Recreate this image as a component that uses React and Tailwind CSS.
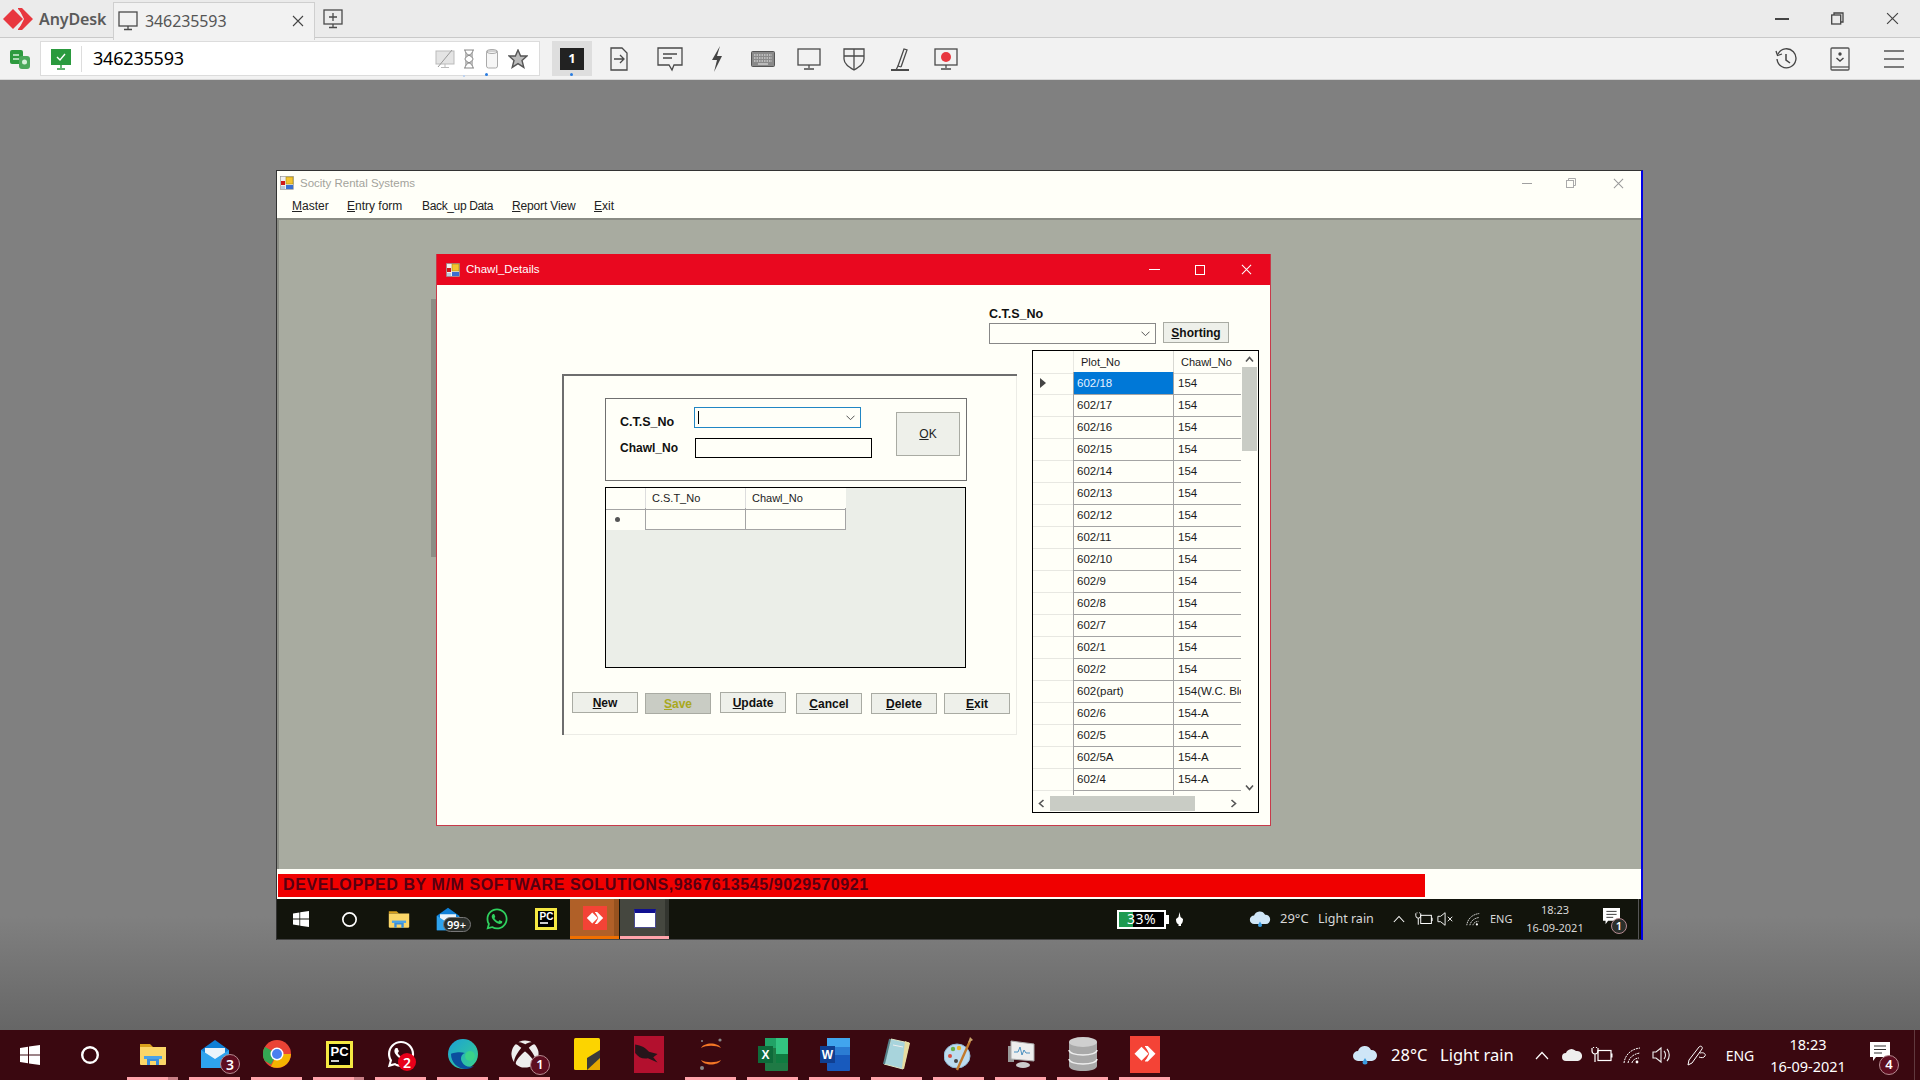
import React from "react";
import { FaWhatsapp, FaXbox } from "react-icons/fa";

const sans = "font-['Liberation_Sans',Arial,sans-serif]";
const noto = "font-['Noto_Sans',sans-serif]";

const Ic = ({ w = 24, h = 24, vb, children, className = "" }) => (
  <svg width={w} height={h} viewBox={vb || `0 0 ${w} ${h}`} fill="none" className={className}>{children}</svg>
);

const AnyLogo = ({ w = 30, h = 22, c = "#e8373f" }) => (
  <Ic w={w} h={h} vb="0 0 30 22">
    <path d="M0 11 L10 1 L20 11 L10 21Z" fill={c} />
    <path d="M15 0 L19 0 L30 11 L19 22 L15 22 L15 21 L24 11 L15 1Z" fill={c} />
    <path d="M16 1 L26 11 L16 21 L21 11Z" fill={c} />
  </Ic>
);

const stroke = { stroke: "#4a4a4a", strokeWidth: 1.3, fill: "none" };

const MonitorOutline = ({ w = 20, h = 20 }) => (
  <Ic w={w} h={h} vb="0 0 20 20"><rect x="1" y="1" width="18" height="14" {...stroke} /><path d="M10 15v3M6 18.5h8" {...stroke} /></Ic>
);

const NewTabIcon = () => (
  <Ic w={20} h={20}><rect x="1" y="1" width="18" height="14" {...stroke} /><path d="M10 4v8M6 8h8M10 15v3M6 18.5h8" {...stroke} /></Ic>
);

const CloseX = ({ s = 12, c = "#444" }) => (
  <Ic w={s} h={s} vb="0 0 12 12"><path d="M1 1l10 10M11 1L1 11" stroke={c} strokeWidth="1.1" /></Ic>
);

const ToolIcons = {
  file: (
    <Ic w={20} h={24}><path d="M2 1h11l5 5v17H2z" {...stroke} /><path d="M5 12h9M11 8l4 4-4 4" {...stroke} /></Ic>
  ),
  chat: (
    <Ic w={26} h={26}><path d="M1 2h24v17H17l-2 5-3-5H1z" {...stroke} /><path d="M6 8h14M6 12h9" {...stroke} /></Ic>
  ),
  bolt: (
    <Ic w={14} h={26}><path d="M10 0L2 14h5L4 26 12 10H7z" fill="#444" /></Ic>
  ),
  keyboard: (
    <Ic w={24} h={16}><rect x="0.5" y="0.5" width="23" height="15" rx="1" fill="#8a8a8a" stroke="#555" /><path d="M3 4h18M3 7h18M3 10h18" stroke="#eee" strokeDasharray="1.5 1" /><path d="M7 13h10" stroke="#eee" /></Ic>
  ),
  monitor: (
    <Ic w={24} h={24}><rect x="1" y="2" width="22" height="16" {...stroke} /><path d="M12 18v3M7 22h10" {...stroke} /></Ic>
  ),
  shield: (
    <Ic w={22} h={24}><path d="M1 2h20v10c0 5-5 8-10 11C6 20 1 17 1 12z" {...stroke} /><path d="M11 2v21M1 9h20" {...stroke} /></Ic>
  ),
  pen: (
    <Ic w={20} h={24}><path d="M8 19L14 2l3 1-6 17" {...stroke} /><path d="M1 23h18" stroke="#4a4a4a" strokeWidth="2" /><path d="M6 23l2-4 3 1" {...stroke} /></Ic>
  ),
  record: (
    <Ic w={24} h={24}><rect x="1" y="2" width="22" height="16" {...stroke} /><circle cx="12" cy="10" r="5" fill="#e8373f" /><path d="M12 18v3M7 22h10" {...stroke} /></Ic>
  ),
};

const GreyIcons = () => (
  <div className="flex items-center w-[100px] relative">
    <div className="w-[24px] flex justify-center">
      <Ic w={20} h={20}><rect x="1" y="2" width="18" height="13" stroke="#bbb" fill="#e4e4e4" /><path d="M3 18L17 1" stroke="#999" /><path d="M10 15v3M6 18.5h8" stroke="#bbb" /></Ic>
    </div>
    <div className="w-[24px] flex justify-center">
      <Ic w={14} h={20}><path d="M2 1h10M2 19h10M3 1c0 5 8 6 8 9s-8 4-8 9M11 1c0 5-8 6-8 9s8 4 8 9" stroke="#888" fill="#bbb" /></Ic>
    </div>
    <div className="w-[22px] flex justify-center">
      <Ic w={14} h={22}><rect x="1.5" y="3" width="11" height="17" rx="2" stroke="#aaa" fill="#f6f6f6" /><ellipse cx="7" cy="3.5" rx="5.5" ry="2" stroke="#aaa" /></Ic>
    </div>
    <div className="w-[30px] flex justify-center">
      <Ic w={20} h={20}><path d="M10 1l2.6 6H19l-5 4.4 1.8 7L10 14.6 4.2 18.4l1.8-7L1 7h6.4z" stroke="#555" strokeWidth="1.4" fill="#bbb" /></Ic>
    </div>
    <div className="absolute left-[30px] top-[27px] w-[2px] h-[2px] bg-[#c0d4f0]"></div>
    <div className="absolute left-[52px] top-[25px] w-[3px] h-[3px] rounded-full bg-[#2a7de1]"></div>
  </div>
);

const TopBar = () => (
  <div className={`${noto} shrink-0`}>
    <div className="h-[38px] bg-[#ebebeb] flex border-b border-[#c9c9c9]">
      <div className="w-[113px] flex items-center pl-[3px]">
        <AnyLogo />
        <span className="ml-[6px] text-[16px] font-semibold text-[#5a5a5a] tracking-[-0.1px]">AnyDesk</span>
      </div>
      <div className="w-[202px] h-[38px] mt-[2px] bg-[#f2f2f2] border border-[#cfcfcf] border-b-0 flex items-center pl-[4px] pb-[2px]">
        <MonitorOutline />
        <span className="ml-[7px] text-[16px] text-[#555] w-[147px] tracking-[-0.1px]">346235593</span>
        <CloseX />
      </div>
      <div className="ml-[8px] flex items-center"><NewTabIcon /></div>
      <div className="flex-1 flex items-center justify-end">
        <div className="w-[14px] h-[2px] bg-[#444] mr-[42px] mb-[0px]"></div>
        <div className="mr-[42px]">
          <Ic w={13} h={13}><rect x="0.7" y="3" width="9" height="9" stroke="#444" strokeWidth="1.3" /><path d="M3 3V1h9v9h-2" stroke="#444" strokeWidth="1.3" /></Ic>
        </div>
        <div className="mr-[21px]"><CloseX s={13} /></div>
      </div>
    </div>
    <div className="h-[42px] bg-[#f2f2f2] flex items-center border-b border-[#d8d8d8]">
      <div className="w-[40px] flex justify-center">
        <Ic w={20} h={22}><rect x="0" y="2" width="13" height="14" rx="2" fill="#2d9a3e" /><rect x="9" y="8" width="11" height="13" rx="3" fill="#4aa85a" /><path d="M3 7h6M3 11h6" stroke="#d6f0da" strokeWidth="1.5" /><circle cx="14.5" cy="14" r="2.5" fill="#d6f0da" /></Ic>
      </div>
      <div className="w-[500px] h-[35px] bg-white border border-[#dcdcdc] flex items-center">
        <div className="w-[40px] flex justify-center">
          <Ic w={22} h={22}><rect x="1" y="1" width="20" height="16" fill="#2a9a3e" /><path d="M7 9l3 3 5-6" stroke="#fff" strokeWidth="1.4" /><path d="M11 17v3M7 21h8" stroke="#2a9a3e" strokeWidth="1.4" /></Ic>
        </div>
        <div className="w-px h-[26px] bg-[#ddd]"></div>
        <span className="ml-[11px] w-[340px] text-[18px] text-black tracking-[-0.2px]">346235593</span>
        <GreyIcons />
      </div>
      <div className="ml-[12px] w-[40px] h-[35px] bg-[#dedede] relative flex items-center justify-center">
        <div className="w-[24px] h-[22px] bg-[#222] text-white text-[13px] font-bold flex items-center justify-center">1</div>
        <div className="absolute left-[18px] bottom-[0px] w-[3px] h-[3px] rounded-full bg-[#2a7de1]"></div>
      </div>
      <div className="w-[54px] ml-[0px] flex justify-center">{ToolIcons.file}</div>
      <div className="w-[48px] flex justify-center">{ToolIcons.chat}</div>
      <div className="w-[46px] flex justify-center">{ToolIcons.bolt}</div>
      <div className="w-[46px] flex justify-center">{ToolIcons.keyboard}</div>
      <div className="w-[45px] flex justify-center">{ToolIcons.monitor}</div>
      <div className="w-[46px] flex justify-center">{ToolIcons.shield}</div>
      <div className="w-[46px] flex justify-center">{ToolIcons.pen}</div>
      <div className="w-[46px] flex justify-center">{ToolIcons.record}</div>
      <div className="flex-1"></div>
      <div className="w-[54px] flex justify-center">
        <Ic w={22} h={22}><path d="M3 6a9.5 9.5 0 1 1-1 5" stroke="#444" strokeWidth="1.3" /><path d="M1 3l1.5 4.5L7 6" stroke="#444" strokeWidth="1.3" /><path d="M11 6v6l4 3" stroke="#444" strokeWidth="1.5" /></Ic>
      </div>
      <div className="w-[54px] flex justify-center">
        <Ic w={20} h={24}><rect x="1" y="1" width="18" height="22" rx="1" stroke="#555" strokeWidth="1.3" /><path d="M1 20h18" stroke="#555" strokeWidth="1.3" /><circle cx="10" cy="7" r="1.7" fill="#444" /><path d="M6.5 11l3.5 3 3.5-3" stroke="#444" strokeWidth="1.5" /></Ic>
      </div>
      <div className="w-[53px] flex justify-center mr-[0px]">
        <Ic w={22} h={22}><path d="M1 3h20M1 11h20M1 19h20" stroke="#555" strokeWidth="1.5" /></Ic>
      </div>
    </div>
  </div>
);

const FormIcon = ({ s = 14 }) => (
  <Ic w={s} h={s} vb="0 0 14 14">
    <rect x="0.5" y="0.5" width="13" height="13" fill="#f0f0f0" stroke="#888" strokeWidth="0.6" />
    <rect x="6" y="1" width="7" height="7" fill="#f4c430" stroke="#a68a10" strokeWidth="0.6" />
    <rect x="1" y="5" width="4" height="4" fill="#d01818" />
    <rect x="6" y="9" width="7" height="4" fill="#3a6fd0" />
    <rect x="1" y="10" width="4" height="3" fill="#bcd" />
  </Ic>
);

const U = ({ t, rest }) => (<><span className="underline">{t}</span>{rest}</>);

const Btn = ({ t, rest, w = "w-[66px]", cls = "", dis, offset }) => (
  <button className={`${w} h-[21px] border border-[#a9aba3] text-[12px] font-bold flex items-center justify-center shrink-0 ${dis ? "bg-[#c9ccc4] text-[#a8a820]" : "bg-[#eef0ea] text-[#111]"} ${offset ? "mt-px" : ""} ${cls}`}>
    <U t={t} rest={rest} />
  </button>
);

const Chevron = ({ c = "#555" }) => (
  <Ic w={9} h={6} vb="0 0 9 6"><path d="M0.5 0.7L4.500 4.700L8.500 0.7" stroke={c} strokeWidth="1" /></Ic>
);

const rows = [
  ["602/18", "154"], ["602/17", "154"], ["602/16", "154"], ["602/15", "154"], ["602/14", "154"],
  ["602/13", "154"], ["602/12", "154"], ["602/11", "154"], ["602/10", "154"], ["602/9", "154"],
  ["602/8", "154"], ["602/7", "154"], ["602/1", "154"], ["602/2", "154"], ["602(part)", "154(W.C. Bloc"],
  ["602/6", "154-A"], ["602/5", "154-A"], ["602/5A", "154-A"], ["602/4", "154-A"],
];

const ArrowSvg = ({ d }) => (
  <Ic w={9} h={9} vb="0 0 9 9"><path d={d} stroke="#555" strokeWidth="1.6" /></Ic>
);

const PlotGrid = () => (
  <div className="ml-[15px] w-[227px] h-[463px] border border-black bg-[#fffff8] flex flex-col text-[11.500px] text-[#1a1a1a] overflow-hidden">
    <div className="flex h-[444px]">
      <div className="w-[208px] overflow-hidden">
        <div className="grid grid-cols-[41px_100px_67px] h-[21px] text-[11px]">
          <div className="border-r border-b border-[#e8e8e2]"></div>
          <div className="border-r border-b border-[#d8d8d2] pl-[7px] leading-[22px]">Plot_No</div>
          <div className="border-b border-[#d8d8d2] pl-[7px] leading-[22px] whitespace-nowrap overflow-hidden">Chawl_No</div>
        </div>
        {rows.map((r, i) => (
          <div key={r[0]} className="grid grid-cols-[41px_100px_67px] h-[22px]">
            <div className="border-b border-[#e8e8e2] border-r border-r-[#a4a4a4] flex items-center pl-[7px]">
              {i === 0 && <Ic w={6} h={10}><path d="M0 0l6 5-6 5z" fill="#444" /></Ic>}
            </div>
            <div className={`border-r border-b border-[#a4a4a4] pl-[3px] leading-[22px] ${i === 0 ? "bg-[#0078d7] text-[#e6f2ff]" : ""}`}>{r[0]}</div>
            <div className="border-b border-[#a4a4a4] pl-[4px] leading-[22px] whitespace-nowrap">{r[1]}</div>
          </div>
        ))}
        <div className="grid grid-cols-[41px_100px_67px] h-[6px]">
          <div className="border-r border-[#a4a4a4]"></div>
          <div className="border-r border-[#a4a4a4]"></div>
          <div></div>
        </div>
      </div>
      <div className="w-[17px] flex flex-col items-center">
        <div className="h-[16px] flex items-center"><ArrowSvg d="M1 6.500l3.500-4 3.500 4" /></div>
        <div className="w-[15px] h-[84px] bg-[#c9ccc5]"></div>
        <div className="flex-1"></div>
        <div className="h-[16px] flex items-center"><ArrowSvg d="M1 2.500l3.500 4 3.500-4" /></div>
      </div>
    </div>
    <div className="h-[17px] flex items-center">
      <div className="w-[17px] flex justify-center"><ArrowSvg d="M6.500 1l-4 3.500 4 3.500" /></div>
      <div className="w-[145px] h-[15px] bg-[#c9ccc5]"></div>
      <div className="w-[34px]"></div>
      <ArrowSvg d="M2.500 1l4 3.500-4 3.500" />
    </div>
  </div>
);

const EntryGrid = () => (
  <div className="mt-[6px] ml-[41px] w-[361px] h-[181px] border border-black bg-[#ebeee8] text-[11px] text-[#222]">
    <div className="grid grid-cols-[40px_100px_100px] w-[240px] h-[20px] bg-[#fffff8]">
      <div className="border-r border-[#ddd] border-b border-b-[#a4a4a4]"></div>
      <div className="border-r border-[#ddd] border-b border-b-[#a4a4a4] pl-[6px] leading-[21px]">C.S.T_No</div>
      <div className="border-b border-b-[#a4a4a4] pl-[6px] leading-[21px]">Chawl_No</div>
    </div>
    <div className="grid grid-cols-[40px_100px_100px] w-[240px] h-[22px] bg-[#fffff8]">
      <div className="border-r border-[#a4a4a4] flex items-center pl-[9px]"><div className="w-[5px] h-[5px] rounded-full bg-[#555]"></div></div>
      <div className="border-r border-b border-[#a4a4a4]"></div>
      <div className="border-r border-b border-[#a4a4a4]"></div>
    </div>
  </div>
);

const Dialog = () => (
  <div className={`${sans} relative ml-[157px] mt-[34px] w-[835px] h-[572px] border border-[#c83a4a] border-t-0 bg-[#fffff8] flex flex-col`}>
    <div className="absolute left-[-6px] top-[45px] w-[5px] h-[258px] bg-[#8b8d85]"></div>
    <div className="h-[31px] bg-[#e9081f] flex items-center pl-[9px] shrink-0">
      <FormIcon />
      <span className="ml-[6px] text-[11.5px] text-white">Chawl_Details</span>
      <div className="flex-1"></div>
      <div className="w-[11px] h-px bg-white mr-[35px]"></div>
      <div className="w-[10px] h-[10px] border border-white mr-[36px]"></div>
      <div className="mr-[18px]"><CloseX s={11} c="#fff" /></div>
    </div>
    <div className="flex justify-start h-[65px] pt-[21px] pl-[552px] shrink-0">
      <div className="flex flex-col">
        <span className="text-[12.5px] font-bold leading-[16px] text-[#111]">C.T.S_No</span>
        <div className="flex mt-px">
          <div className="w-[167px] h-[21px] border border-[#888] flex items-center justify-end pr-[5px]"><Chevron /></div>
          <Btn t="S" rest="horting" cls="ml-[7px] -mt-[1px]" />
        </div>
      </div>
    </div>
    <div className="flex flex-1 pl-[125px]">
      <div className="w-[455px] h-[361px] mt-[24px] border-l-2 border-t-2 border-[#6e6e6e] relative flex flex-col">
        <div className="absolute right-0 top-0 bottom-0 w-px bg-[#ecece6]"></div>
        <div className="absolute right-0 left-0 bottom-0 h-px bg-[#ecece6]"></div>
        <div className="mt-[22px] ml-[41px] w-[362px] h-[83px] border border-[#707070] flex pl-px pt-px">
          <div className="w-[70px] pl-[13px] pt-[14px] text-[12px] font-bold text-[#111] flex flex-col gap-[12px] leading-[14px] shrink-0 whitespace-nowrap">
            <span className="text-[12.5px] mt-px">C.T.S_No</span>
            <span>Chawl_No</span>
          </div>
          <div className="ml-[17px] pt-[7px] flex flex-col">
            <div className="w-[167px] h-[21px] border border-[#2186c4] flex items-center justify-between pl-[3px] pr-[5px]">
              <div className="w-px h-[13px] bg-black"></div>
              <Chevron />
            </div>
            <div className="mt-[10px] ml-px w-[177px] h-[20px] border border-black"></div>
          </div>
          <div className="ml-[24px] mt-[12px]">
            <button className="w-[64px] h-[44px] border border-[#a9aba3] bg-[#eef0ea] text-[12px] text-[#222]"><U t="O" rest="K" /></button>
          </div>
        </div>
        <EntryGrid />
        <div className="flex ml-[8px] mt-[24px]">
          <Btn t="N" rest="ew" />
          <Btn t="S" rest="ave" dis offset cls="ml-[7px]" />
          <Btn t="U" rest="pdate" cls="ml-[9px]" />
          <Btn t="C" rest="ancel" offset cls="ml-[10px]" />
          <Btn t="D" rest="elete" offset cls="ml-[9px]" />
          <Btn t="E" rest="xit" offset cls="ml-[7px]" />
        </div>
      </div>
      <PlotGrid />
    </div>
  </div>
);

/* small tray glyphs */
const WinLogo = ({ s = 20 }) => (
  <Ic w={s} h={s} vb="0 0 20 20"><path d="M0 3l8-1.200v7.700H0zM9 1.600L20 0v9.500H9zM0 10.500h8v7.700L0 17zM9 10.500h11V20L9 18.400z" fill="#fff" /></Ic>
);
const Ring = ({ s = 18, w = 2.4 }) => (
  <Ic w={s} h={s} vb="0 0 18 18"><circle cx="9" cy="9" r={9 - w / 2} stroke="#fff" strokeWidth={w} /></Ic>
);
const Folder = ({ s = 28 }) => (
  <Ic w={s} h={s} vb="0 0 28 28">
    <path d="M1 4h10l3 3H1z" fill="#d9a01c" />
    <path d="M1 7h26v17a1 1 0 0 1-1 1H2a1 1 0 0 1-1-1z" fill="#fbd668" />
    <path d="M8 25v-7h12v7h-3v-4h-6v4z" fill="#3a8edb" />
    <rect x="5" y="16" width="18" height="3" fill="#4aa3e8" />
  </Ic>
);
const Mail = ({ s = 30 }) => (
  <Ic w={s} h={s} vb="0 0 30 30">
    <path d="M1 11L15 1l14 10v18H1z" fill="#0f7fd6" />
    <path d="M5 9h20v8l-10 6-10-6z" fill="#eaf4fb" />
    <path d="M1 11l14 9 14-9v18H1z" fill="#2ea3ee" />
  </Ic>
);
const Badge = ({ t, cls, bg = "bg-[#5e0d20]" }) => (
  <div className={`absolute rounded-full ${bg} border border-[#b58a90] text-white flex items-center justify-center font-semibold ${cls}`}>{t}</div>
);
const PCIcon = ({ s = 28, f = 12 }) => (
  <div style={{ width: s, height: s }} className="bg-black border-[3px] border-[#f4e842] flex flex-col text-white font-bold leading-none pl-[2px] pt-[1px]">
    <span style={{ fontSize: f }} className="font-['Liberation_Sans',sans-serif]">PC</span>
    <div className="w-[8px] h-[2px] bg-[#ccc] mt-auto mb-[3px]"></div>
  </div>
);
const Chrome = () => (
  <Ic w={28} h={32} vb="0 0 28 28">
    <circle cx="14" cy="14" r="14" fill="#ea4335" />
    <path d="M14 14L2 21a14 14 0 0 1 0-14z" fill="#4da14f" />
    <path d="M2 21a14 14 0 0 1 0-14l12 7-6 10.400z" fill="#34a853" />
    <path d="M14 14h14a14 14 0 0 1-20 12.400z" fill="#f4b400" />
    <circle cx="14" cy="14" r="6.500" fill="#fff" />
    <circle cx="14" cy="14" r="5" fill="#4a7ff0" />
  </Ic>
);
const Edge = () => (
  <Ic w={30} h={30} vb="0 0 30 30">
    <defs><linearGradient id="edg" x1="0" y1="0" x2="1" y2="1"><stop offset="0" stopColor="#1ba0d8" /><stop offset="1" stopColor="#3ad28a" /></linearGradient></defs>
    <circle cx="15" cy="15" r="15" fill="url(#edg)" />
    <path d="M3 15c0 8 6 15 15 15 3 0 6-1 8-3-5 2-10 0-12-4-2-3-1-8 3-9-5-2-14 0-14 1z" fill="#0a4f9e" />
    <circle cx="22" cy="17" r="5" fill="#3ad28a" />
  </Ic>
);
const Sticky = () => (
  <Ic w={26} h={32} vb="0 0 26 32"><rect x="0" y="0" width="26" height="32" rx="1.500" fill="#fcd400" /><path d="M13 32V20l13-8v20z" fill="#3a3a3a" /><path d="M13 32l13-12v12z" fill="#e6a800" /></Ic>
);
const Dragon = () => (
  <div className="w-[30px] h-[37px] bg-[#b3102e] flex items-center justify-center">
    <Ic w={30} h={32} vb="0 0 26 30"><path d="M0 6c6 1 10 3 13 7l8 2-4 3 4 5-9-4c-5 1-9-1-12-5z" fill="#25151a" /></Ic>
  </div>
);
const Jupyter = () => (
  <Ic w={26} h={34} vb="0 0 26 34">
    <path d="M3 11c3-6 17-6 20 0-5-3-15-3-20 0zM3 23c3 6 17 6 20 0-5 3-15 3-20 0z" fill="#f37726" />
    <circle cx="22" cy="3" r="1.600" fill="#888" /><circle cx="4" cy="31" r="2" fill="#888" /><circle cx="4" cy="4" r="1" fill="#888" />
  </Ic>
);
const Excel = () => (
  <Ic w={30} h={33} vb="0 0 30 33">
    <rect x="7" y="0" width="23" height="33" rx="1" fill="#1f7a45" /><rect x="18" y="0" width="12" height="16" fill="#33c481" /><rect x="7" y="0" width="11" height="10" fill="#21a366" /><rect x="18" y="16" width="12" height="9" fill="#107c41" />
    <rect x="0" y="8" width="15" height="17" fill="#0e6b3a" />
    <text x="7.500" y="21" textAnchor="middle" fontSize="12" fontWeight="700" fill="#fff" fontFamily="Liberation Sans">X</text>
  </Ic>
);
const Word = () => (
  <Ic w={30} h={33} vb="0 0 30 33">
    <rect x="7" y="0" width="23" height="33" rx="1" fill="#185abd" /><rect x="7" y="0" width="23" height="9" fill="#41a5ee" /><rect x="7" y="9" width="23" height="8" fill="#2b7cd3" />
    <rect x="0" y="8" width="15" height="17" fill="#103f91" />
    <text x="7.500" y="21" textAnchor="middle" fontSize="12" fontWeight="700" fill="#fff" fontFamily="Liberation Sans">W</text>
  </Ic>
);
const Notepad = () => (
  <Ic w={28} h={32} vb="0 0 28 32"><path d="M8 1l18 4-6 26L1 26z" fill="#a8d4dc" stroke="#dfe9c8" /><path d="M22 3l5 2-6 26-2-1z" fill="#e6dca0" /><path d="M1 26l6-25" stroke="#55808a" strokeWidth="2" /><path d="M10 7l10 2" stroke="#eee" /></Ic>
);
const Palette = () => (
  <Ic w={30} h={34} vb="0 0 30 34">
    <ellipse cx="13" cy="19" rx="13" ry="12" fill="#bcdcef" stroke="#8fb9d6" />
    <circle cx="6" cy="19" r="2" fill="#d94c3d" /><circle cx="9" cy="12" r="2.200" fill="#6ab04c" /><circle cx="15" cy="11" r="2.200" fill="#e9b82e" /><circle cx="12" cy="24" r="2" fill="#444" />
    <path d="M13 33L26 4" stroke="#c27a2b" strokeWidth="2.400" /><path d="M24 6l2-6 3 3z" fill="#c9a26a" />
  </Ic>
);
const SysMon = () => (
  <Ic w={28} h={32} vb="0 0 28 32">
    <rect x="1" y="8" width="6" height="16" fill="#999" />
    <path d="M4 3l23 3v17L4 21z" fill="#eee" stroke="#aaa" />
    <path d="M7 14l4 0 2-5 2 8 2-5 2 3h4" stroke="#4a90c0" strokeWidth="1" />
    <ellipse cx="16" cy="27" rx="7" ry="3" fill="#ccc" />
  </Ic>
);
const DB = () => (
  <Ic w={30} h={34} vb="0 0 30 34">
    <path d="M1 5v24c0 3 6 5 14 5s14-2 14-5V5z" fill="#a9a9a9" />
    <path d="M1 13c0 3 6 5 14 5s14-2 14-5M1 22c0 3 6 5 14 5s14-2 14-5" stroke="#eee" strokeWidth="1.500" />
    <ellipse cx="15" cy="5" rx="14" ry="5" fill="#cfcfcf" />
  </Ic>
);
const AnyTile = ({ s = 30, ls = 22 }) => (
  <div style={{ width: s, height: s + 7 }} className="bg-[#f44336] flex items-center justify-center">
    <AnyLogo w={ls} h={ls * 0.7} c="#fff" />
  </div>
);
const CloudRain = ({ w = 26 }) => (
  <Ic w={w} h={w} vb="0 0 26 26">
    <path d="M6 19a5 5 0 0 1 0-10 7 7 0 0 1 13-1 5.500 5.500 0 0 1 1 11z" fill="#cfe6f7" />
    <path d="M13 16l2.500 4a2.500 2.500 0 1 1-5 0z" fill="#3a9be0" />
  </Ic>
);
const Caret = ({ s = 14 }) => (<Ic w={s} h={s / 2 + 2} vb="0 0 14 9"><path d="M1 8l6-6.500L13 8" stroke="#fff" strokeWidth="1.200" /></Ic>);
const Wifi = ({ s = 18, c = "#fff" }) => (
  <Ic w={s} h={s} vb="0 0 18 18">
    <path d="M1 17C2 9 8 3 17 2M5 17c1-5 5-9 12-10M9 17c0-2 3-5 7-5" stroke={c} strokeWidth="1" strokeDasharray="2 0.800" />
    <circle cx="14" cy="16" r="1.400" fill={c} />
  </Ic>
);
const Plug = ({ w = 22, c = "#fff", fill }) => (
  <Ic w={w} h={16} vb="0 0 22 16">
    <rect x="7" y="3.500" width="13" height="10" stroke={c} strokeWidth="1.200" fill={fill ? c : "none"} />
    <rect x="20" y="6.500" width="1.500" height="4" fill={c} />
    <path d="M1 1v3a3 3 0 0 0 6 0V1M4 7v8M2.500 1v-1M5.500 1v-1" stroke={c} strokeWidth="1.200" />
  </Ic>
);
const Speaker = ({ x }) => (
  <Ic w={20} h={18} vb="0 0 20 18">
    <path d="M1 6h3l5-4v14l-5-4H1z" stroke="#eee" strokeWidth="1.100" />
    {x ? <path d="M12 6.500l5 5M17 6.500l-5 5" stroke="#eee" strokeWidth="1.100" /> : <path d="M12 5c2 2 2 6 0 8M15 3c3 3 3 9 0 12" stroke="#eee" strokeWidth="1.100" />}
  </Ic>
);
const Pen = () => (
  <Ic w={22} h={22} vb="0 0 22 22"><path d="M2 21l1-5L13 3c2-2 4 0 3 2L6 19zM14 9c4-1 6 1 5 3s-4 2-6 1" stroke="#fff" strokeWidth="1" /></Ic>
);
const Notif = ({ s = 20 }) => (
  <Ic w={s} h={s} vb="0 0 20 20"><path d="M0 0h20v15H6l-3 4v-4H0z" fill="#fff" /><path d="M4 4h12M4 7.500h12M4 11h8" stroke="#333" strokeWidth="1.100" /></Ic>
);

const Under = ({ extra }) => (
  <div className="absolute left-[5px] right-[6px] bottom-0 h-[3px] bg-[#ffa4ab] flex justify-end">
    {extra && <div className="w-[10px] h-[3px] bg-[#c97f86]"></div>}
  </div>
);

const slots = [
  { e: <Folder />, u: 1, x: 1 },
  { e: <div className="relative"><Mail /><Badge t="3" cls="w-[20px] h-[20px] text-[14px] left-[20px] top-[15px]" /></div>, u: 1 },
  { e: <Chrome />, u: 1 },
  { e: <PCIcon s={27} f={13} />, u: 1, x: 1 },
  { e: <div className="relative"><FaWhatsapp size={30} color="#fff" /><Badge t="2" bg="bg-[#e8001a]" cls="w-[18px] h-[18px] text-[14px] left-[12px] top-[14px] border-0" /></div>, u: 1 },
  { e: <Edge />, u: 1 },
  { e: <div className="relative"><FaXbox size={28} color="#eee" /><Badge t="1" cls="w-[20px] h-[20px] text-[13px] left-[19px] top-[15px]" /></div>, u: 1 },
  { e: <Sticky /> },
  { e: <Dragon /> },
  { e: <Jupyter />, u: 1 },
  { e: <Excel />, u: 1 },
  { e: <Word />, u: 1 },
  { e: <Notepad />, u: 1 },
  { e: <Palette />, u: 1 },
  { e: <SysMon />, u: 1 },
  { e: <DB />, u: 1 },
  { e: <AnyTile />, u: 1 },
];

const MainTaskbar = () => (
  <div className={`${noto} h-[50px] bg-[#3a0810] flex items-stretch text-white shrink-0`}>
    <div className="w-[60px] flex items-center justify-center"><WinLogo /></div>
    <div className="w-[60px] flex items-center justify-center"><Ring /></div>
    <div className="w-[2px]"></div>
    {slots.map((s, i) => (
      <div key={i} className="w-[62px] relative flex items-center justify-center pb-[2px]">
        {s.e}
        {s.u && <Under extra={s.x} />}
      </div>
    ))}
    <div className="w-[176px]"></div>
    <div className="w-[39px] flex items-center justify-start"><CloudRain /></div>
    <div className="w-[49px] flex items-center text-[16.500px]">28°C</div>
    <div className="w-[87px] flex items-center text-[16.500px]">Light rain</div>
    <div className="w-[30px] flex items-center justify-center"><Caret /></div>
    <div className="w-[30px] flex items-center justify-center">
      <Ic w={20} h={14} vb="0 0 20 14"><path d="M4 13a4 4 0 0 1 0-8 6 6 0 0 1 10-2 5 5 0 0 1 2 10z" fill="#eee" /></Ic>
    </div>
    <div className="w-[30px] flex items-center justify-center"><Plug fill={false} /></div>
    <div className="w-[30px] flex items-center justify-center"><Wifi /></div>
    <div className="w-[30px] flex items-center justify-center"><Speaker /></div>
    <div className="w-[40px] flex items-center justify-center"><Pen /></div>
    <div className="w-[46px] flex items-center justify-center text-[14px]">ENG</div>
    <div className="w-[90px] flex flex-col items-center justify-center text-[14.500px] leading-[22px] whitespace-nowrap"><span>18:23</span><span>16-09-2021</span></div>
    <div className="w-[61px] relative flex items-center justify-center pb-[6px] pr-[8px]">
      <Notif />
      <Badge t="4" cls="w-[20px] h-[20px] text-[13px] left-[26px] top-[25px]" />
    </div>
    <div className="w-px bg-[#7a5a5e] opacity-60"></div>
  </div>
);

const RSlot = ({ w, children, cls = "" }) => (
  <div className={`${w} flex items-center justify-center shrink-0 ${cls}`}>{children}</div>
);

const RemoteTaskbar = () => (
  <div className={`${noto} h-[41px] bg-[#12140c] flex items-stretch text-[#d8d8d8] shrink-0 border-b border-[#444]`}>
    <RSlot w="w-[48px]"><WinLogo s={16} /></RSlot>
    <RSlot w="w-[48px]"><Ring s={15} w={2} /></RSlot>
    <RSlot w="w-[1px]" />
    <RSlot w="w-[49px]"><Folder s={22} /></RSlot>
    <RSlot w="w-[49px]">
      <div className="relative"><Mail s={24} />
        <div className="absolute left-[7px] top-[10px] w-[28px] h-[15px] rounded-full bg-[#2b2f2b] border border-[#777] text-[11px] font-semibold text-white flex items-center justify-center leading-none">99+</div>
      </div>
    </RSlot>
    <RSlot w="w-[49px]"><FaWhatsapp size={24} color="#2fd05e" /></RSlot>
    <RSlot w="w-[49px]"><PCIcon s={22} f={10} /></RSlot>
    <div className="w-[49px] relative bg-[#b06028] flex items-center justify-center">
      <div className="absolute right-0 top-0 bottom-0 w-[5px] bg-[#96521f]"></div>
      <div className="absolute left-0 right-0 bottom-0 h-[3px] bg-[#f07000]"></div>
      <div className="w-[24px] h-[24px] bg-[#f44336] flex items-center justify-center mb-[2px] relative"><AnyLogo w={18} h={12} c="#fff" /></div>
    </div>
    <div className="w-[49px] relative bg-[#45473f] flex items-center justify-center ml-px -mr-px">
      <div className="absolute right-0 top-0 bottom-0 w-[4px] bg-[#33352f]"></div>
      <div className="absolute left-0 right-0 bottom-0 h-[3px] bg-[#ffa4ab]"></div>
      <div className="w-[22px] h-[19px] bg-white border border-[#4a4a90] border-t-[4px] border-t-[#101090] mb-[2px]"></div>
    </div>
    <div className="w-[449px] shrink-0"></div>
    <div className="flex items-center">
      <div className="w-[49px] h-[19px] border-2 border-white relative text-[14px] text-white flex items-center justify-center bg-black">
        <div className="absolute left-0 top-0 bottom-0 w-[14px] bg-[#1e9a50]"></div>
        <span className="relative leading-none tracking-[0.5px]">33%</span>
        <div className="absolute right-[-5px] top-[3px] w-[3px] h-[9px] bg-white"></div>
      </div>
    </div>
    <RSlot w="w-[23px]" cls="pl-[3px]">
      <Ic w={7} h={14} vb="0 0 7 14"><path d="M3.500 0l1 5L7 7c0 4-1.500 5-2 5v2H2.500v-2C1.500 12 0 11 0 7l2.500-2z" fill="#fff" /></Ic>
    </RSlot>
    <div className="w-[60px] shrink-0"></div>
    <RSlot w="w-[32px]" cls="justify-start"><CloudRain w={22} /></RSlot>
    <div className="w-[38px] flex items-center text-[13px] -ml-px">29°C</div>
    <div className="w-[69px] flex items-center text-[12.500px] whitespace-nowrap">Light rain</div>
    <RSlot w="w-[24px]"><Caret s={12} /></RSlot>
    <RSlot w="w-[26px]"><Plug w={18} /></RSlot>
    <RSlot w="w-[18px]"><Speaker x /></RSlot>
    <RSlot w="w-[35px]"><Wifi s={14} /></RSlot>
    <div className="w-[23px] flex items-center text-[11px]">ENG</div>
    <div className="w-[84px] flex flex-col items-center justify-center text-[11px] leading-[18px] whitespace-nowrap"><span>18:23</span><span>16-09-2021</span></div>
    <div className="w-[41px] relative flex items-center pl-[6px] pb-[6px]">
      <Notif s={17} />
      <Badge t="1" cls="w-[16px] h-[16px] text-[11px] left-[14px] top-[19px]" bg="bg-[#2b2f2b]" />
    </div>
    <div className="w-px bg-[#555]"></div>
  </div>
);

const RemoteWindow = () => (
  <div className={`${sans} w-[1367px] h-[770px] border-t border-l border-[#333] border-r-2 border-r-[#0000e6] bg-[#fffff8] flex flex-col`}>
    <div className="h-[24px] flex items-center pl-[3px] shrink-0">
      <FormIcon />
      <span className="ml-[6px] text-[11.500px] text-[#a3a39c] pt-px">Socity Rental Systems</span>
      <div className="flex-1"></div>
      <div className="w-[10px] h-px bg-[#a0a0a0] mr-[34px]"></div>
      <div className="mr-[36px]"><Ic w={11} h={11}><rect x="0.500" y="2.500" width="7" height="7" stroke="#aaa" /><path d="M2.500 2.500v-2h7v7h-2" stroke="#aaa" /></Ic></div>
      <div className="mr-[17px]"><CloseX s={11} c="#999" /></div>
    </div>
    <div className="h-[25px] flex items-center text-[12px] text-[#222] border-b-2 border-[#8a8c84] shrink-0 pl-[15px] pb-[2px]">
      <span className="w-[55px]"><U t="M" rest="aster" /></span>
      <span className="w-[75px]"><U t="E" rest="ntry form" /></span>
      <span className="w-[90px] tracking-[-0.35px]">Back_up Data</span>
      <span className="w-[82px] tracking-[-0.15px]"><U t="R" rest="eport View" /></span>
      <span><U t="E" rest="xit" /></span>
    </div>
    <div className="flex-1 bg-[#a8aba0] border-l-2 border-[#8a8c84] flex flex-col">
      <Dialog />
    </div>
    <div className="h-[30px] shrink-0 pt-[5px] pl-px">
      <div className="w-[1147px] h-[23px] bg-[#f00000] text-[#560012] font-bold text-[16px] tracking-[0.6px] leading-[22px] pl-[5px] whitespace-nowrap">DEVELOPPED BY M/M SOFTWARE SOLUTIONS,9867613545/9029570921</div>
    </div>
    <RemoteTaskbar />
  </div>
);

export default function App() {
  return (
    <div className="w-[1920px] h-[1080px] flex flex-col overflow-hidden">
      <TopBar />
      <div className="flex-1 pt-[90px] pl-[276px] bg-[linear-gradient(#808080_0%,#808080_88%,#666666_100%)]">
        <RemoteWindow />
      </div>
      <MainTaskbar />
    </div>
  );
}
